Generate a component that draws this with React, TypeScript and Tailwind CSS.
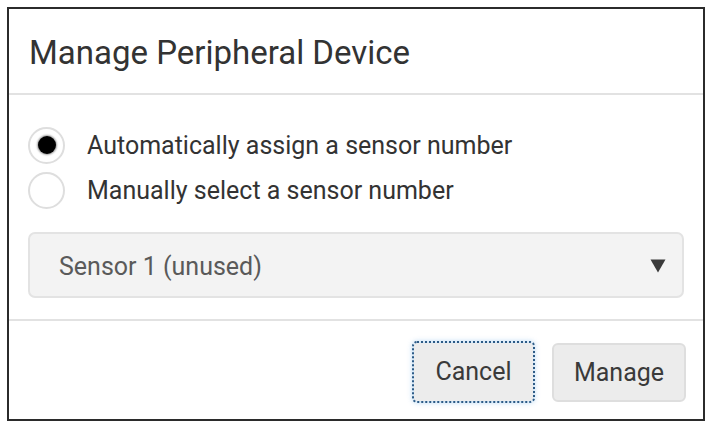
export default function App() {
  return (
    <div className="w-[709px] h-[423px] bg-white pl-[7px] pt-[7px] font-['Roboto',sans-serif]">
      <div className="w-[698px] h-[414px] border-2 border-[#2b2b2b] flex flex-col bg-white">
        {/* header */}
        <div className="h-[86px] flex items-center pl-[20px] border-b-2 border-[#e2e2e2]">
          <h1 className="text-[33px] text-[#333] leading-none pt-[2px]">Manage Peripheral Device</h1>
        </div>

        {/* body */}
        <div className="flex flex-col px-[19px] pt-[32px] pb-[21px] border-b-2 border-[#e2e2e2]">
          <label className="flex items-center gap-[22px] h-[36px]">
            <span className="w-[37px] h-[37px] rounded-full border-2 border-[#dedede] flex items-center justify-center">
              <span className="w-[18px] h-[18px] rounded-full bg-black shadow-[0_0_2px_1px_rgba(0,0,0,0.4)]" />
            </span>
            <span className="text-[25px] text-[#333] leading-none">Automatically assign a sensor number</span>
          </label>
          <label className="flex items-center gap-[22px] h-[36px] mt-[9px]">
            <span className="w-[37px] h-[37px] rounded-full border-2 border-[#dedede]" />
            <span className="text-[25px] text-[#333] leading-none">Manually select a sensor number</span>
          </label>

          <div className="mt-[24px] h-[66px] rounded-[7px] border-2 border-[#e3e3e3] bg-[#f3f3f3] flex items-center justify-between pl-[29px] pr-[16px]">
            <span className="text-[25px] text-[#5a5a5a] leading-none pt-[3px]">Sensor 1 (unused)</span>
            <svg width="16" height="14" viewBox="0 0 16 14" className="mt-[2px]">
              <path d="M0.5 0.5 H15.5 L8 13.5 Z" fill="#3a3a3a" />
            </svg>
          </div>
        </div>

        {/* footer */}
        <div className="flex justify-end gap-[19px] pr-[17px] pt-[22px]">
          <button className="w-[119px] h-[58px] rounded-[3px] bg-[#ececec] text-[25px] text-[#3a3a3a] outline-2 outline-dotted outline-[#2d5b86] shadow-[0_0_5px_2px_rgba(120,180,230,0.45)]">
            Cancel
          </button>
          <button className="w-[134px] h-[59px] rounded-[6px] bg-[#ececec] border-2 border-[#dedede] text-[25px] text-[#3a3a3a]">
            Manage
          </button>
        </div>
      </div>
    </div>
  );
}
